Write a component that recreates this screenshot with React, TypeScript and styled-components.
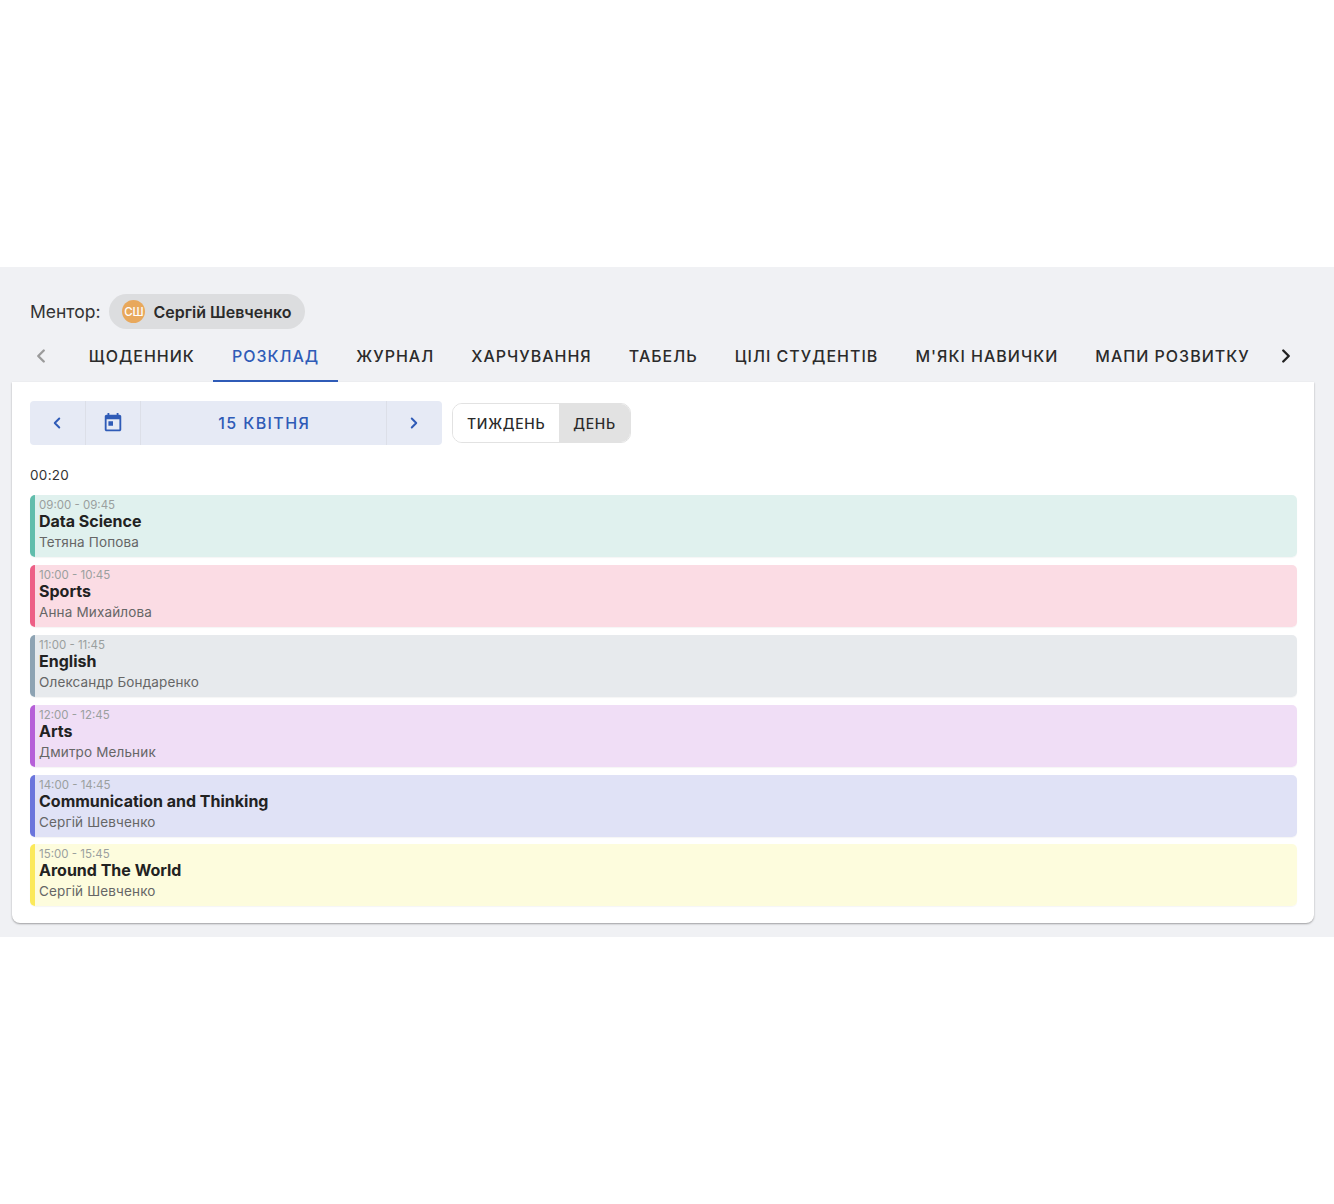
import React from "react";
import styled, { createGlobalStyle } from "styled-components";
import { ChevronLeft, ChevronRight } from "lucide-react";

const lessons = [
  { time: "09:00 - 09:45", title: "Data Science", teacher: "Тетяна Попова", bg: "#e0f1ee", accent: "#61bdac" },
  { time: "10:00 - 10:45", title: "Sports", teacher: "Анна Михайлова", bg: "#fbdce4", accent: "#ed5f86" },
  { time: "11:00 - 11:45", title: "English", teacher: "Олександр Бондаренко", bg: "#e7eaed", accent: "#8da3b3" },
  { time: "12:00 - 12:45", title: "Arts", teacher: "Дмитро Мельник", bg: "#f0def6", accent: "#b65fd8" },
  { time: "14:00 - 14:45", title: "Communication and Thinking", teacher: "Сергій Шевченко", bg: "#e0e2f6", accent: "#6a75dc" },
  { time: "15:00 - 15:45", title: "Around The World", teacher: "Сергій Шевченко", bg: "#fdfcdd", accent: "#fbe95a" },
];

const tabs = ["ЩОДЕННИК", "РОЗКЛАД", "ЖУРНАЛ", "ХАРЧУВАННЯ", "ТАБЕЛЬ", "ЦІЛІ СТУДЕНТІВ", "М'ЯКІ НАВИЧКИ", "МАПИ РОЗВИТКУ"];

const CalendarIcon = () => (
  <svg width="22" height="22" viewBox="0 0 24 24" fill="#2f5bb7">
    <path d="M19 3h-1V1h-2v2H8V1H6v2H5c-1.11 0-1.99.9-1.99 2L3 19c0 1.1.89 2 2 2h14c1.1 0 2-.9 2-2V5c0-1.1-.9-2-2-2zm0 16H5V8h14v11zM7 10h5v5H7z" />
  </svg>
);

const App = () => {
  return (
    <>
      <GlobalStyle />
      <Page>
        <MentorRow>
          <MentorLabel>Ментор:</MentorLabel>
          <Chip>
            <Avatar>СШ</Avatar>
            <ChipName>Сергій Шевченко</ChipName>
          </Chip>
        </MentorRow>
        <TabBar>
          <ScrollButton $muted>
            <ChevronLeft size={22} strokeWidth={2.6} />
          </ScrollButton>
          <TabList>
            {tabs.map((tab) => (
              <Tab key={tab} $active={tab === "РОЗКЛАД"}>
                {tab}
              </Tab>
            ))}
          </TabList>
          <ScrollButton>
            <ChevronRight size={22} strokeWidth={2.6} />
          </ScrollButton>
        </TabBar>
        <Card>
          <Toolbar>
            <DateNav>
              <NavButton>
                <ChevronLeft size={18} strokeWidth={2.6} />
              </NavButton>
              <NavButton>
                <CalendarIcon />
              </NavButton>
              <DateLabel>15 КВІТНЯ</DateLabel>
              <NavButton $last>
                <ChevronRight size={18} strokeWidth={2.6} />
              </NavButton>
            </DateNav>
            <Toggle>
              <ToggleItem>ТИЖДЕНЬ</ToggleItem>
              <ToggleItem $selected>ДЕНЬ</ToggleItem>
            </Toggle>
          </Toolbar>
          <Duration>00:20</Duration>
          <LessonList>
            {lessons.map((lesson) => (
              <Lesson key={lesson.time} $bg={lesson.bg} $accent={lesson.accent}>
                <LessonTime>{lesson.time}</LessonTime>
                <LessonTitle>{lesson.title}</LessonTitle>
                <LessonTeacher>{lesson.teacher}</LessonTeacher>
              </Lesson>
            ))}
          </LessonList>
        </Card>
      </Page>
    </>
  );
};

const GlobalStyle = createGlobalStyle`
  html, body {
    margin: 0;
    padding: 0;
    background: #fff;
    font-family: Inter, "Liberation Sans", sans-serif;
  }
  * {
    box-sizing: border-box;
  }
`;

const Page = styled.div`
  margin-top: 267px;
  margin-bottom: 267px;
  height: 670px;
  padding: 27px 20px 14px 12px;
  background: #f0f1f4;
`;

const MentorRow = styled.div`
  display: flex;
  align-items: center;
  gap: 9px;
  height: 35px;
  padding-left: 18px;
`;

const MentorLabel = styled.span`
  font-size: 17.5px;
  color: #333;
`;

const Chip = styled.div`
  display: flex;
  align-items: center;
  gap: 8px;
  height: 35px;
  padding: 0 13px 0 13px;
  border-radius: 18px;
  background: #dcdddf;
`;

const Avatar = styled.div`
  display: flex;
  align-items: center;
  justify-content: center;
  width: 23px;
  height: 23px;
  border-radius: 50%;
  background: #e8a85c;
  color: #fff;
  font-size: 11.5px;
  font-weight: 500;
`;

const ChipName = styled.span`
  font-size: 16px;
  font-weight: 600;
  color: #2b2b2b;
`;

const TabBar = styled.div`
  display: flex;
  align-items: stretch;
  height: 53px;
  width: 1302px;
`;

const ScrollButton = styled.div<{ $muted?: boolean }>`
  display: flex;
  flex-shrink: 0;
  align-items: center;
  justify-content: center;
  width: ${(props) => (props.$muted ? "58.3px" : "36px")};
  color: ${(props) => (props.$muted ? "#9b9b9b" : "#222")};
`;

const TabList = styled.div`
  display: flex;
  flex-shrink: 0;
`;

const Tab = styled.div<{ $active?: boolean }>`
  display: flex;
  align-items: center;
  height: 100%;
  padding: 0 18.55px;
  font-size: 16px;
  font-weight: 500;
  letter-spacing: 1px;
  white-space: nowrap;
  color: ${(props) => (props.$active ? "#2f5bb7" : "#2b2b2b")};
  box-shadow: ${(props) => (props.$active ? "inset 0 -2px 0 #2f5bb7" : "none")};
`;

const Card = styled.div`
  width: 1302px;
  height: 541px;
  padding: 19px 17px 0 18px;
  background: #fff;
  border-radius: 0 0 8px 8px;
  box-shadow: 0 1px 2px rgba(0, 0, 0, 0.35);
`;

const Toolbar = styled.div`
  display: flex;
  align-items: center;
  gap: 10px;
`;

const DateNav = styled.div`
  display: flex;
  align-items: stretch;
  width: 412px;
  height: 44px;
  border-radius: 4px;
  background: #e6eaf5;
  color: #2f5bb7;
`;

const NavButton = styled.div<{ $last?: boolean }>`
  display: flex;
  align-items: center;
  justify-content: center;
  width: 55.5px;
  border-right: ${(props) => (props.$last ? "none" : "1px solid #dcdfe8")};
`;

const DateLabel = styled.div`
  display: flex;
  flex: 1;
  align-items: center;
  justify-content: center;
  padding-left: 2px;
  font-size: 16px;
  font-weight: 500;
  letter-spacing: 1.4px;
  border-right: 1px solid #dcdfe8;
`;

const Toggle = styled.div`
  display: flex;
  height: 40px;
  overflow: hidden;
  border: 1px solid #e2e2e2;
  border-radius: 10px;
`;

const ToggleItem = styled.div<{ $selected?: boolean }>`
  display: flex;
  align-items: center;
  padding: 0 14px;
  font-size: 14px;
  font-weight: 500;
  letter-spacing: 0.7px;
  color: #2b2b2b;
  background: ${(props) => (props.$selected ? "#e2e2e2" : "#fff")};
`;

const Duration = styled.div`
  margin-top: 20px;
  font-size: 13.5px;
  line-height: 20px;
  letter-spacing: 0.3px;
  color: #333;
`;

const LessonList = styled.div`
  display: flex;
  flex-direction: column;
  gap: 7.95px;
  margin-top: 9.8px;
`;

const Lesson = styled.div<{ $bg: string; $accent: string }>`
  display: flex;
  flex-direction: column;
  height: 62px;
  padding: 4px 0 0 9px;
  border-radius: 5px;
  background: linear-gradient(to right, ${(props) => props.$accent} 5px, ${(props) => props.$bg} 5px);
  box-shadow: 0 1px 1px rgba(0, 0, 0, 0.04);
`;

const LessonTime = styled.span`
  font-size: 11.5px;
  line-height: 13px;
  color: #9a9f9e;
`;

const LessonTitle = styled.span`
  font-size: 16px;
  font-weight: 700;
  line-height: 19px;
  color: #222;
`;

const LessonTeacher = styled.span`
  margin-top: 3px;
  font-size: 13.5px;
  line-height: 16px;
  letter-spacing: 0.15px;
  color: #666;
`;

export default App;
